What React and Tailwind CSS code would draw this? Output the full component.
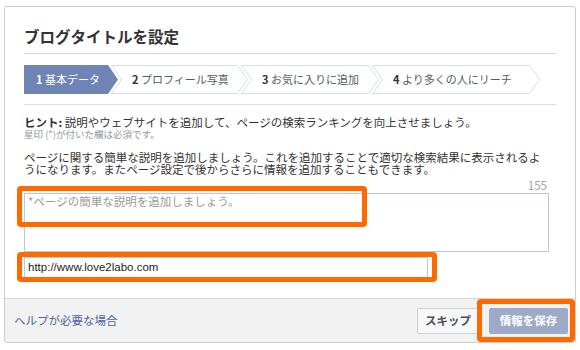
const steps = [
  { n: '1', label: '基本データ', w: 94, active: true },
  { n: '2', label: 'プロフィール写真', w: 137 },
  { n: '3', label: 'お気に入りに追加', w: 138 },
  { n: '4', label: 'より多くの人にリーチ', w: 168 },
];

const Step = ({ n, label, w, active, first }) => {
  const h = 29;
  const points = active
    ? `0,0 ${w - 10},0 ${w},14.5 ${w - 10},${h} 0,${h}`
    : `0.5,0.5 ${w - 10.5},0.5 ${w - 0.5},14.5 ${w - 10.5},${h - 0.5} 0.5,${h - 0.5} 10.5,14.5`;
  return (
    <div
      className={`relative h-[29px] flex items-center shrink-0 ${first ? '' : '-ml-[7px]'}`}
      style={{ width: w }}
    >
      <svg className="absolute inset-0" width={w} height={h}>
        <polygon
          points={points}
          fill={active ? '#6d84b4' : '#ffffff'}
          stroke={active ? 'none' : '#d5dcea'}
          strokeWidth="1"
        />
      </svg>
      <span
        className={`relative text-[11px] leading-none whitespace-nowrap ${active ? 'pl-[12px] text-white' : 'pl-[21px] text-[#555b68]'}`}
      >
        <b className={active ? 'text-white' : 'text-[#333]'}>{n}</b> {label}
      </span>
    </div>
  );
};

export default function App() {
  return (
    <div
      className="relative w-[580px] h-[350px] bg-white pl-[4px] pt-[6px]"
      style={{ fontFamily: '"Noto Sans CJK JP", "Noto Sans", sans-serif' }}
    >
      <div className="w-[572px] h-[337px] border border-[#c9ccd1] rounded-[3px] flex flex-col">
        <div className="px-[19px] pt-[19px]">
          <div className="pb-[7px] border-b border-[#d3d6db]">
            <h1 className="text-[15.5px] leading-[20px] font-bold text-[#333]">ブログタイトルを設定</h1>
          </div>

          <div className="flex mt-[11px]">
            {steps.map((s, i) => (
              <Step key={s.n} {...s} first={i === 0} />
            ))}
          </div>

          <div className="mt-[10px] border-t border-[#dcdfe4] pt-[10px]">
            <p className="text-[11.5px] leading-[14px] text-[#333] whitespace-nowrap">
              <b>ヒント:</b> 説明やウェブサイトを追加して、ページの検索ランキングを向上させましょう。
            </p>
            <p className="text-[9.5px] leading-[11px] text-[#9197a3]">星印 (*)が付いた欄は必須です。</p>
            <div className="mt-[11px] text-[11.5px] leading-[12px] text-[#333] whitespace-nowrap">
              <p>ページに関する簡単な説明を追加しましょう。これを追加することで適切な検索結果に表示されるよ</p>
              <p>うになります。またページ設定で後からさらに情報を追加することもできます。</p>
            </div>

            <div className="mt-[4px] w-[525px] flex justify-end pr-[2px]">
              <span className="text-[11.5px] leading-[12px] text-[#a3a3a3]">155</span>
            </div>
            <div className="mt-[2px] w-[525px] h-[59px] border border-[#bdc7d8] px-[3px]">
              <p className="text-[11.5px] leading-[14px] text-[#9a9a9a]">*ページの簡単な説明を追加しましょう。</p>
            </div>
            <div
              className="mt-[5px] w-[404px] h-[22px] border border-[#bdc7d8] flex items-center px-[3px] text-[11.5px] text-[#222]"
              style={{ fontFamily: '"Liberation Sans", Arial, sans-serif' }}
            >
              http://www.love2labo.com
            </div>
          </div>
        </div>

        <div className="mt-[19px] flex-1 bg-[#f2f2f2] border-t border-[#d3d6db] rounded-b-[3px] flex items-center justify-between pl-[9px] pr-[7px]">
          <span className="text-[11.5px] text-[#4a64a0]">ヘルプが必要な場合</span>
          <div className="flex gap-[10px] mt-[1px]">
            <button className="w-[62px] h-[26px] bg-[#f6f7f9] border border-[#ced0d4] rounded-[2px] text-[11.5px] font-bold text-[#4b4f56]">
              スキップ
            </button>
            <button className="w-[79px] h-[26px] bg-[#9dabc9] border border-[#9dabc9] rounded-[2px] text-[11.5px] font-bold text-white">
              情報を保存
            </button>
          </div>
        </div>
      </div>

      <div className="absolute left-[17px] top-[186px] w-[350px] h-[41px] border-[5px] border-[#ff6a00] rounded-[4px]" />
      <div className="absolute left-[17px] top-[252px] w-[420px] h-[30px] border-[5px] border-[#ff6a00] rounded-[4px]" />
      <div className="absolute left-[477px] top-[299px] w-[98px] h-[43px] border-[5px] border-[#ff6a00] rounded-[4px]" />
    </div>
  );
}
